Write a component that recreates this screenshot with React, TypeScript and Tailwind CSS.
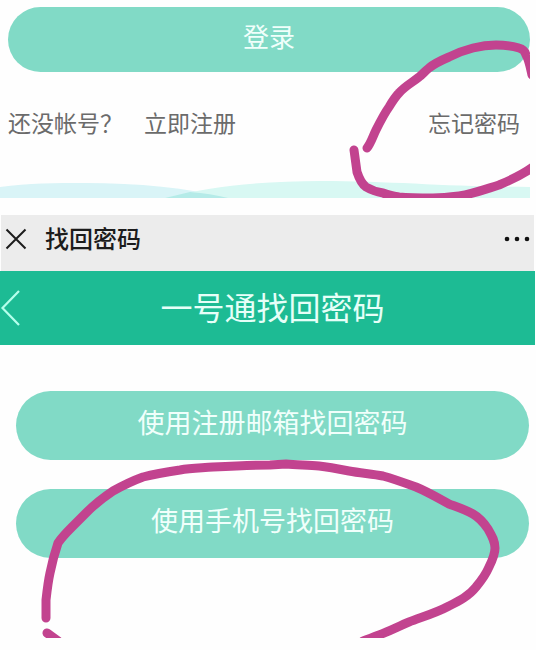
import type { ReactNode } from "react";

function PillButton({ children }: { children: ReactNode }) {
  return (
    <button
      type="button"
      className="flex w-full items-center justify-center rounded-full bg-[#81dac6] pb-2 text-[27px] leading-8 text-[#f0fffb]"
    >
      {children}
    </button>
  );
}

function Waves() {
  return (
    <svg viewBox="0 0 530 18" preserveAspectRatio="none" className="block h-[18px] w-full" aria-hidden="true">
      <path d="M0 7C28 3 56 3 85 3C138 3 188 8 228 18H0Z" fill="#d9f4f7" />
      <path d="M165 18C210 6 265 1 320 1C395 1 450 7 530 7V18Z" fill="#d8f8f3" />
      <path d="M165 18L190 12C204 13 216 15 228 18Z" fill="#b5ebe8" />
    </svg>
  );
}

function LoginPanel() {
  return (
    <section className="relative mr-1.5 overflow-hidden pt-[7px]">
      <div className="grid h-[65px] pl-2">
        <PillButton>
          <span className="text-[26px]">登录</span>
        </PillButton>
      </div>
      <div className="mt-[34px] flex items-center justify-between pr-2.5 pl-2 text-[23px] leading-8 text-[#6b6b6b]">
        <div className="flex gap-[21px]">
          <span>还没帐号？</span>
          <a href="#register">立即注册</a>
        </div>
        <a href="#forgot">忘记密码</a>
      </div>
      <div className="mt-[42px]">
        <Waves />
      </div>
      <svg
        viewBox="0 0 530 198"
        preserveAspectRatio="none"
        className="pointer-events-none absolute inset-0 h-full w-full"
        fill="none"
        stroke="#c2438f"
        strokeWidth="9"
        strokeLinecap="round"
        strokeLinejoin="round"
        aria-hidden="true"
      >
        <path d="M367 148C371 143 373 136 376 130C380 122 384 114 389 107C392 102 395 97 399 93C405 86 413 82 419 77C423 74 425 71 429 68C435 63 442 60 449 57C457 53 465 50 473 48C481 46 488 45 496 45C504 45 512 46 519 48C523 49 525 51 526 55C529 60 530 66 532 75" />
        <path d="M354 150L357 172C359 178 362 184 366 187C371 190 377 192 383 193C388 195 393 196 399 197C410 198 421 198 433 198C442 198 451 197 459 196C473 194 486 189 499 185C511 180 522 175 533 167" />
      </svg>
    </section>
  );
}

function RecoverPanel() {
  return (
    <section className="relative mt-[17px] h-[423px] overflow-hidden">
      <header className="mr-0.5 ml-px flex h-14 items-center bg-[#ececec] pb-2 text-[#1c1c1c]">
        <button type="button" aria-label="关闭" className="pl-1">
          <svg width="22" height="22" viewBox="0 0 22 22" fill="none" stroke="currentColor" strokeWidth="2">
            <path d="M1.500 1.500L20.500 20.500M20.500 1.500L1.500 20.500" />
          </svg>
        </button>
        <h1 className="ml-[18px] pb-0.5 text-2xl font-medium">找回密码</h1>
        <button type="button" aria-label="更多" className="ml-auto pr-1">
          <svg width="26" height="6" viewBox="0 0 26 6" fill="#111">
            <circle cx="3" cy="3" r="2.300" />
            <circle cx="13" cy="3" r="2.300" />
            <circle cx="23" cy="3" r="2.300" />
          </svg>
        </button>
      </header>

      <div className="mr-px grid h-[74px] grid-cols-[24px_1fr_14px] items-center bg-[#1dbb94] text-[#e6fff8]">
        <button type="button" aria-label="返回">
          <svg width="22" height="38" viewBox="0 0 22 38" fill="none" stroke="#b5ffec" strokeWidth="2.200">
            <path d="M19 2L2.500 19L19 36" />
          </svg>
        </button>
        <h2 className="pb-1 text-center text-[32px] leading-10">一号通找回密码</h2>
      </div>

      <div className="mt-[46px] grid auto-rows-[69px] gap-[29px] pr-[7px] pl-4">
        <PillButton>使用注册邮箱找回密码</PillButton>
        <PillButton>使用手机号找回密码</PillButton>
      </div>

      <svg
        viewBox="0 0 536 423"
        preserveAspectRatio="none"
        className="pointer-events-none absolute inset-0 h-full w-full"
        fill="none"
        stroke="#c2438f"
        strokeWidth="9"
        strokeLinecap="round"
        strokeLinejoin="round"
        aria-hidden="true"
      >
        <path d="M46 403C46 397 46 391 46 385C47 376 48 367 50 358C52 348 55 337 58 328C62 322 67 317 72 312L87 297C95 289 104 282 113 276C122 271 132 266 143 262C155 259 167 257 180 255C191 253 202 253 213 252C232 251 251 250 270 250L286 249C297 250 308 250 319 251C329 252 339 254 349 256C360 258 372 259 383 261C394 264 405 268 416 272C428 277 438 283 449 289C457 292 466 295 473 299C480 303 484 308 488 314C492 321 495 326 495 333C495 340 492 346 489 352C486 359 481 366 476 372C469 381 459 386 449 391C436 398 422 402 409 407C399 411 390 416 379 420C374 422 369 424 363 426" />
        <path d="M47 418L58 426" />
      </svg>
    </section>
  );
}

export default function App() {
  return (
    <main className="min-h-screen overflow-hidden bg-[#fefefe] font-['Noto_Sans_CJK_SC',sans-serif]">
      <LoginPanel />
      <RecoverPanel />
    </main>
  );
}
